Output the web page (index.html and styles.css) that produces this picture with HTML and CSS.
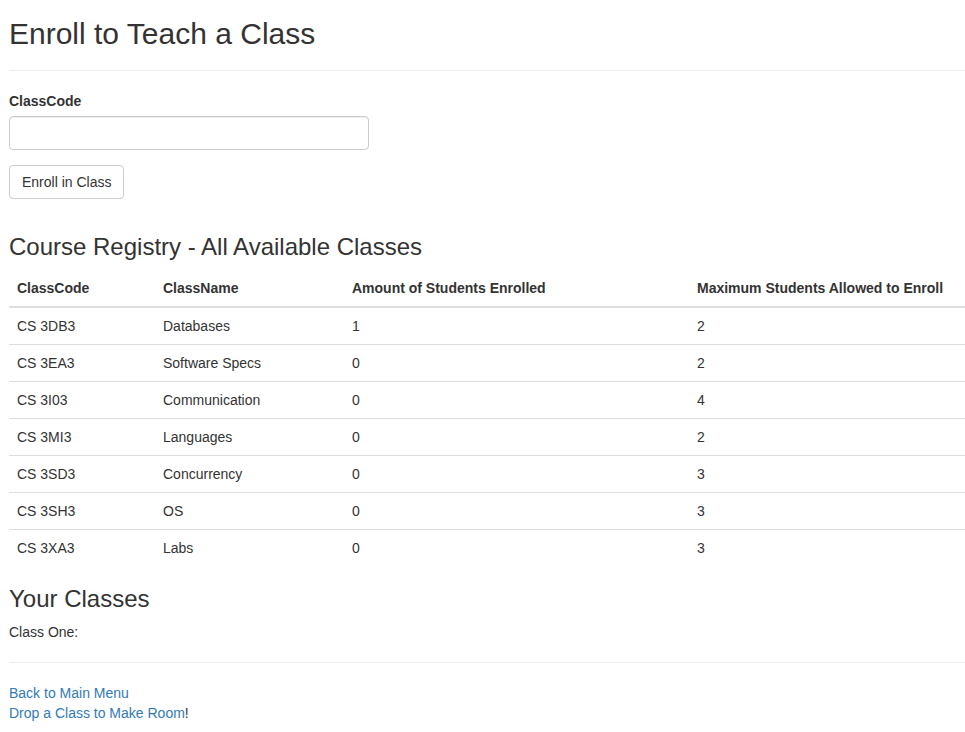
FILE: index.html
```html
<!DOCTYPE html>
<html>
<head>
<meta charset="utf-8">
<title>Enroll to Teach a Class</title>
<link rel="stylesheet" href="styles.css">
</head>
<body>
<div class="page">
  <h2 class="title">Enroll to Teach a Class</h2>
  <hr class="rule">
  <form class="enroll-form">
    <div class="form-group">
      <label class="field-label" for="code">ClassCode</label>
      <input class="field-input" id="code" type="text">
    </div>
    <button class="btn" type="button">Enroll in Class</button>
  </form>
  <h3 class="section-title first">Course Registry - All Available Classes</h3>
  <table class="registry">
    <colgroup>
      <col class="c1"><col class="c2"><col class="c3"><col class="c4">
    </colgroup>
    <thead>
      <tr><th>ClassCode</th><th>ClassName</th><th>Amount of Students Enrolled</th><th>Maximum Students Allowed to Enroll</th></tr>
    </thead>
    <tbody>
      <tr><td>CS 3DB3</td><td>Databases</td><td>1</td><td>2</td></tr>
      <tr><td>CS 3EA3</td><td>Software Specs</td><td>0</td><td>2</td></tr>
      <tr><td>CS 3I03</td><td>Communication</td><td>0</td><td>4</td></tr>
      <tr><td>CS 3MI3</td><td>Languages</td><td>0</td><td>2</td></tr>
      <tr><td>CS 3SD3</td><td>Concurrency</td><td>0</td><td>3</td></tr>
      <tr><td>CS 3SH3</td><td>OS</td><td>0</td><td>3</td></tr>
      <tr><td>CS 3XA3</td><td>Labs</td><td>0</td><td>3</td></tr>
    </tbody>
  </table>
  <h3 class="section-title">Your Classes</h3>
  <p class="text">Class One:</p>
  <hr class="rule">
  <div class="links">
    <a class="link" href="#">Back to Main Menu</a><br>
    <a class="link" href="#">Drop a Class to Make Room</a>!
  </div>
</div>
</body>
</html>
```

FILE: styles.css
```css
* { box-sizing: border-box; }
html, body { margin: 0; padding: 0; background: #fff; }
body {
  font-family: "Liberation Sans", Arial, Helvetica, sans-serif;
  font-size: 14px;
  line-height: 20px;
  color: #333;
}
.page {
  padding: 17px 0 0 9px;
}
.title {
  font-size: 30px;
  font-weight: 500;
  line-height: 33px;
  margin: 0 0 10px;
}
.rule {
  border: 0;
  border-top: 1px solid #eee;
  margin: 20px 0;
  height: 0;
}
.enroll-form { margin: 0; }
.form-group { margin-bottom: 15px; }
.field-label {
  display: inline-block;
  font-weight: bold;
  margin-bottom: 5px;
}
.field-input {
  display: block;
  width: 360px;
  height: 34px;
  padding: 6px 12px;
  font: inherit;
  color: #555;
  background: #fff;
  border: 1px solid #ccc;
  border-radius: 4px;
  box-shadow: inset 0 1px 1px rgba(0,0,0,.075);
}
.btn {
  display: inline-block;
  height: 34px;
  padding: 6px 12px;
  font: inherit;
  color: #333;
  background: #fff;
  border: 1px solid #ccc;
  border-radius: 4px;
  cursor: pointer;
}
.section-title {
  font-size: 24px;
  font-weight: 500;
  line-height: 26px;
  margin: 20px 0 10px;
}
.section-title.first { margin-top: 35px; }
.registry {
  width: 100%;
  border-collapse: collapse;
  border-spacing: 0;
  margin-bottom: 20px;
}
.c1 { width: 146px; }
.c2 { width: 189px; }
.c3 { width: 345px; }
.c4 { width: 276px; }
.registry th, .registry td {
  padding: 8px;
  text-align: left;
  vertical-align: top;
  line-height: 20px;
}
.registry th {
  font-weight: bold;
  border-bottom: 2px solid #ddd;
  vertical-align: bottom;
}
.registry td { border-top: 1px solid #ddd; }
.registry tbody tr:first-child td { border-top: 0; }
.text { margin: 0 0 10px; }
.links { line-height: 20px; }
.link { color: #337ab7; text-decoration: none; }
```
